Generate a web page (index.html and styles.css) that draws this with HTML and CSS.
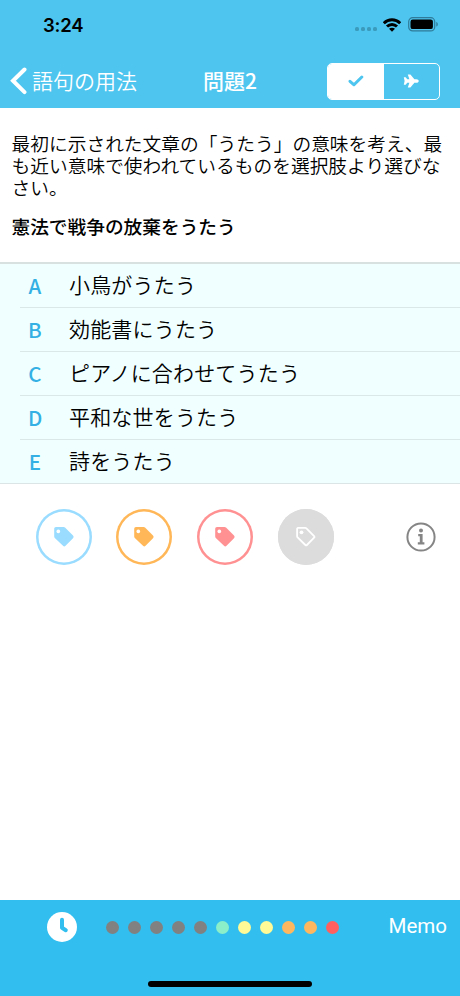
FILE: index.html
```html
<!DOCTYPE html>
<html lang="ja">
<head>
<meta charset="utf-8">
<title>問題2</title>
<link rel="stylesheet" href="styles.css">
</head>
<body>
<div class="screen">
  <header class="header">
    <div class="status">
      <span class="time">3:24</span>
      <div class="indicators">
        <span class="signal"><i></i><i></i><i></i><i></i></span>
        <svg class="wifi" viewBox="0 0 18 14" width="18" height="14">
          <g fill="none" stroke="#000" stroke-width="2.9">
            <path d="M.8 5.200C5.400.5 12.600.5 17.200 5.200"/>
            <path d="M4 8.600c2.800-2.900 7.200-2.900 10 0"/>
          </g>
          <path d="M9 13.800l-3-3c1.600-1.500 4.400-1.500 6 0z"/>
        </svg>
        <svg class="battery" viewBox="0 0 31 15" width="31" height="15">
          <rect x=".7" y=".7" width="26" height="13.200" rx="4" fill="none" stroke="#307b99" stroke-width="1.200"/>
          <rect x="2.500" y="2.500" width="22.400" height="9.600" rx="2.200"/>
          <path d="M28.300 5c2 .6 2 4 0 4.600z" fill="#307b99"/>
        </svg>
      </div>
    </div>
    <nav class="nav">
      <a class="back">
        <svg viewBox="0 0 17 28" width="17" height="28"><path d="M14.500 2.500L3 13.800l11.500 11.300" fill="none" stroke="#fff" stroke-width="4" stroke-linecap="round"/></svg>
        <span>語句の用法</span>
      </a>
      <h1 class="title">問題2</h1>
      <div class="switch">
        <div class="option selected">
          <svg viewBox="0 0 16 12" width="16" height="12"><path d="M2 6.300l4 3.500L13.800 2" fill="none" stroke="#4dc5ef" stroke-width="3" stroke-linecap="round" stroke-linejoin="round"/></svg>
        </div>
        <div class="option">
          <svg viewBox="0 0 16 14" width="16" height="14"><path fill="#fff" d="M.8 3.200h1.900l1.500 2h2.200L4.800.5h2.600l4 4.700h1.900c1.500 0 2.500 1 2.500 1.800s-1 1.800-2.500 1.800h-1.900l-4 4.700H4.800l1.600-4.700H4.200l-1.500 2H.8L1.600 7z"/></svg>
        </div>
      </div>
    </nav>
  </header>

  <main class="main">
    <section class="question">
      <p class="instruction">最初に示された文章の「うたう」の意味を考え、最<br>も近い意味で使われているものを選択肢より選びな<br>さい。</p>
      <p class="prompt">憲法で戦争の放棄をうたう</p>
    </section>
    <ul class="choices">
      <li><b>A</b><span>小鳥がうたう</span></li>
      <li><b>B</b><span>効能書にうたう</span></li>
      <li><b>C</b><span>ピアノに合わせてうたう</span></li>
      <li><b>D</b><span>平和な世をうたう</span></li>
      <li><b>E</b><span>詩をうたう</span></li>
    </ul>
    <div class="tags">
      <span class="tag blue"><svg viewBox="0 0 22 22" width="22" height="22"><path fill="currentColor" fill-rule="evenodd" d="M3 1h7.500c.6 0 1.100.2 1.500.6l8 8c.8.8.8 1.800 0 2.600l-7.500 7.600c-.8.8-1.700.8-2.500 0L1.800 12c-.4-.4-.6-.9-.6-1.500V3c0-1.200.7-2 1.800-2zM5.300 3.500a1.900 1.900 0 1 0 .01 0z"/></svg></span>
      <span class="tag orange"><svg viewBox="0 0 22 22" width="22" height="22"><path fill="currentColor" fill-rule="evenodd" d="M3 1h7.500c.6 0 1.100.2 1.500.6l8 8c.8.8.8 1.800 0 2.600l-7.500 7.600c-.8.8-1.700.8-2.500 0L1.800 12c-.4-.4-.6-.9-.6-1.500V3c0-1.200.7-2 1.800-2zM5.300 3.500a1.900 1.900 0 1 0 .01 0z"/></svg></span>
      <span class="tag red"><svg viewBox="0 0 22 22" width="22" height="22"><path fill="currentColor" fill-rule="evenodd" d="M3 1h7.500c.6 0 1.100.2 1.500.6l8 8c.8.8.8 1.800 0 2.600l-7.500 7.600c-.8.8-1.700.8-2.500 0L1.800 12c-.4-.4-.6-.9-.6-1.500V3c0-1.200.7-2 1.800-2zM5.300 3.500a1.900 1.900 0 1 0 .01 0z"/></svg></span>
      <span class="tag gray"><svg viewBox="0 0 22 22" width="22" height="22"><path fill="none" stroke="#fff" stroke-width="1.800" stroke-linejoin="round" d="M3 1.900h7.300c.4 0 .8.2 1.100.5l7.700 7.700c.5.5.5 1.100 0 1.600l-7.200 7.300c-.5.5-1 .5-1.500 0L2.600 11.400c-.3-.3-.5-.7-.5-1.100V3c0-.7.300-1.100.9-1.100z"/><circle cx="6.500" cy="6.300" r="1.900" fill="#fff"/></svg></span>
      <svg class="info" viewBox="0 0 30 30" width="30" height="30"><circle cx="15" cy="15" r="13.600" fill="none" stroke="#858585" stroke-width="2"/><circle cx="15" cy="8.500" r="2" fill="#858585"/><path fill="#858585" d="M12.200 12h4.400v8.200h1.800v2.200h-6.600v-2.200h2v-6h-1.600z"/></svg>
    </div>
  </main>

  <footer class="footer">
    <div class="toolbar">
      <svg class="clock" viewBox="0 0 30 30" width="30" height="30"><circle cx="15" cy="15" r="15" fill="#fff"/><path d="M15 7.800v8l3.800 2.400" fill="none" stroke="#32bfef" stroke-width="4" stroke-linecap="round" stroke-linejoin="round"/></svg>
      <div class="progress">
        <i></i><i></i><i></i><i></i><i></i><i class="green"></i><i class="yellow"></i><i class="yellow"></i><i class="amber"></i><i class="amber"></i><i class="coral"></i>
      </div>
      <span class="memo">Memo</span>
    </div>
    <div class="home"></div>
  </footer>
</div>
</body>
</html>
```
FILE: styles.css
```css
* { box-sizing: border-box; }
body {
  margin: 0;
  background: #fff;
  color: #000;
  font-family: "Noto Sans CJK JP", sans-serif;
}
h1, p, ul { margin: 0; padding: 0; }
svg { display: block; flex: none; }
.screen {
  width: 460px;
  height: 996px;
  display: flex;
  flex-direction: column;
  overflow: hidden;
}
.header { height: 108px; background: #4dc5ef; flex: none; }
.status {
  height: 54px;
  padding: 0 21px 4px 43px;
  display: flex;
  align-items: center;
  justify-content: space-between;
}
.time { font: 600 18.5px/22px Inter, sans-serif; letter-spacing: -.2px; }
.indicators { display: flex; align-items: center; padding-bottom: 1px; }
.signal { display: flex; gap: 2px; margin: 9px 6px 0 0; }
.signal i { width: 4px; height: 4px; border-radius: 1.500px; background: #3b9bbd; }
.wifi { margin-right: 7px; }
.nav {
  height: 54px;
  display: grid;
  grid-template-columns: 203px 124px 113px;
  align-items: center;
  color: #fff;
}
.back {
  display: flex;
  align-items: center;
  gap: 5px;
  padding-left: 10px;
  font-size: 21px;
  line-height: 30px;
  font-weight: 350;
}
.back span, .title { padding-bottom: 2px; }
.title { font-size: 21px; line-height: 30px; font-weight: 500; }
.switch {
  display: flex;
  width: 113px;
  height: 37px;
  border: 1.500px solid #fff;
  border-radius: 5px;
  overflow: hidden;
}
.option {
  flex: 1;
  display: flex;
  align-items: center;
  justify-content: center;
}
.selected { background: #fff; }
.main { flex: 1; }
.question {
  height: 154px;
  padding: 24px 0 0 11.500px;
  font-size: 18.700px;
  line-height: 22px;
  white-space: nowrap;
}
.instruction { font-weight: 350; letter-spacing: .04px; }
.prompt { margin-top: 17px; font-weight: 500; }
.choices {
  list-style: none;
  background: #f0ffff;
  border-top: 2px solid #d8e0e0;
  border-bottom: 1px solid #dbe5e5;
}
.choices li {
  display: flex;
  align-items: center;
  height: 44px;
  margin-left: 20px;
  padding: 0 0 3px 8px;
  font-size: 21px;
  line-height: 30px;
  font-weight: 350;
  letter-spacing: .18px;
  border-bottom: 1px solid #dbe8e8;
}
.choices li:last-child { height: 43px; border-bottom: 0; }
.choices b {
  width: 14px;
  margin-right: 27px;
  padding-top: 2px;
  text-align: center;
  color: #35b0e4;
  font-size: 20.500px;
  font-weight: 500;
}
.tags { display: flex; align-items: center; padding: 25px 24.500px 0 35.500px; }
.tag {
  width: 56px;
  height: 56px;
  margin-right: 24.800px;
  box-shadow: inset 0 0 0 2.500px currentColor;
  border-radius: 50%;
  display: flex;
  align-items: center;
  justify-content: center;
}
.blue { color: #99dcff; }
.orange { color: #ffb758; }
.red { color: #ff9193; }
.gray { color: #dcdcdc; background: #dcdcdc; }
.info { margin-left: auto; }
.footer {
  height: 96px;
  flex: none;
  background: #32bfef;
}
.toolbar { display: flex; align-items: center; height: 54px; padding-left: 47px; }
.progress { display: flex; gap: 9.100px; margin-left: 28.500px; }
.progress i { width: 13px; height: 13px; border-radius: 50%; background: #818181; }
.progress .green { background: #8befc9; }
.progress .yellow { background: #fffa95; }
.progress .amber { background: #ffb75f; }
.progress .coral { background: #ff605f; }
.memo {
  margin: 0 13px 3px auto;
  color: #fff;
  font: 400 20.500px/26px Roboto, sans-serif;
}
.home { width: 164px; height: 6px; margin: 27px 0 0 148px; border-radius: 3px; background: #000; }
```
